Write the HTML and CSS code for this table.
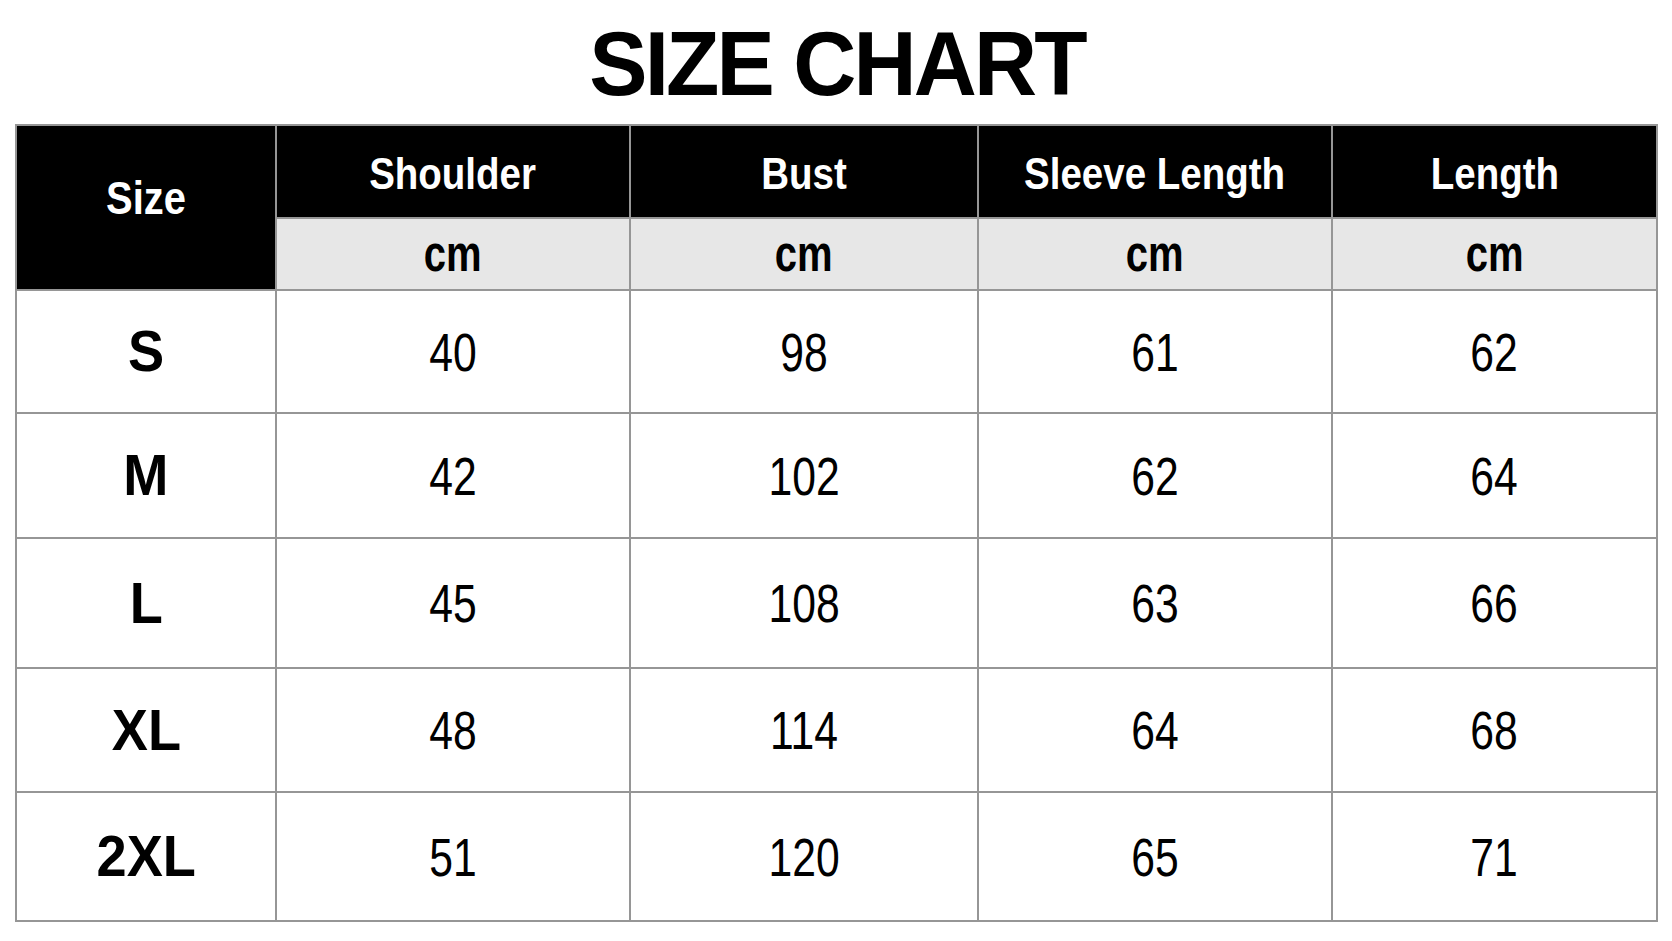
FILE: index.html
```html
<!DOCTYPE html>
<html lang="en">
<head>
<meta charset="utf-8">
<title>Size Chart</title>
<link rel="stylesheet" href="styles.css">
</head>
<body>
<main class="page">
  <h1 class="title"><span class="ttext">SIZE CHART</span></h1>
  <div class="chart">
    <div class="cell head corner"><span class="label">Size</span></div>
    <div class="cell head"><span class="htext">Shoulder</span></div>
    <div class="cell head"><span class="htext">Bust</span></div>
    <div class="cell head"><span class="htext">Sleeve Length</span></div>
    <div class="cell head"><span class="htext">Length</span></div>
    <div class="cell unit"><span class="utext">cm</span></div>
    <div class="cell unit"><span class="utext">cm</span></div>
    <div class="cell unit"><span class="utext">cm</span></div>
    <div class="cell unit"><span class="utext">cm</span></div>

    <div class="cell size"><span class="stext">S</span></div>
    <div class="cell val"><span class="vtext">40</span></div>
    <div class="cell val"><span class="vtext">98</span></div>
    <div class="cell val"><span class="vtext">61</span></div>
    <div class="cell val"><span class="vtext">62</span></div>

    <div class="cell size"><span class="stext">M</span></div>
    <div class="cell val"><span class="vtext">42</span></div>
    <div class="cell val"><span class="vtext">102</span></div>
    <div class="cell val"><span class="vtext">62</span></div>
    <div class="cell val"><span class="vtext">64</span></div>

    <div class="cell size"><span class="stext">L</span></div>
    <div class="cell val"><span class="vtext">45</span></div>
    <div class="cell val"><span class="vtext">108</span></div>
    <div class="cell val"><span class="vtext">63</span></div>
    <div class="cell val"><span class="vtext">66</span></div>

    <div class="cell size"><span class="stext">XL</span></div>
    <div class="cell val"><span class="vtext">48</span></div>
    <div class="cell val"><span class="vtext">114</span></div>
    <div class="cell val"><span class="vtext">64</span></div>
    <div class="cell val"><span class="vtext">68</span></div>

    <div class="cell size"><span class="stext">2XL</span></div>
    <div class="cell val"><span class="vtext">51</span></div>
    <div class="cell val"><span class="vtext">120</span></div>
    <div class="cell val"><span class="vtext">65</span></div>
    <div class="cell val"><span class="vtext">71</span></div>
  </div>
</main>
</body>
</html>
```
FILE: styles.css
```css
* { box-sizing: border-box; }
html, body { margin: 0; padding: 0; background: #ffffff; }
body { font-family: "Liberation Sans", Arial, sans-serif; color: #000; }

.page {
  width: 1672px;
  height: 941px;
  padding: 0 14px 0 15px;
}

.title {
  height: 124px;
  margin: 0;
  display: flex;
  align-items: center;
  justify-content: center;
  font-weight: 700;
  font-size: 91px;
  line-height: 91px;
  letter-spacing: -3px;
  padding-top: 2px;
}

.ttext { display: inline-block; transform: scaleX(0.96); }

.chart {
  display: grid;
  grid-template-columns: 258px 352px 346px 352px 323px;
  grid-template-rows: 91px 70px 121px 123px 128px 122px 127px;
  gap: 2px;
  border: 2px solid #969696;
  background: #969696;
  width: 1643px;
}

.cell {
  display: flex;
  align-items: center;
  justify-content: center;
  background: #ffffff;
  line-height: 1;
}

.cell > span { display: inline-block; white-space: nowrap; }

.head { background: #000; color: #fff; }
.corner { grid-row: span 2; padding-bottom: 20px; }
.unit { background: #e7e7e7; }

.htext {
  font-weight: 700;
  font-size: 45px;
  padding-top: 3px;
  transform: scaleX(0.855);
}
.label {
  font-weight: 700;
  font-size: 47px;
  transform: scaleX(0.85);
}
.utext {
  font-weight: 700;
  font-size: 52px;
  padding-bottom: 2px;
  transform: scaleX(0.77);
}
.stext {
  font-weight: 700;
  font-size: 57px;
  transform: scaleX(0.95);
}
.vtext {
  font-weight: 400;
  font-size: 54px;
  transform: scaleX(0.79);
}
```
